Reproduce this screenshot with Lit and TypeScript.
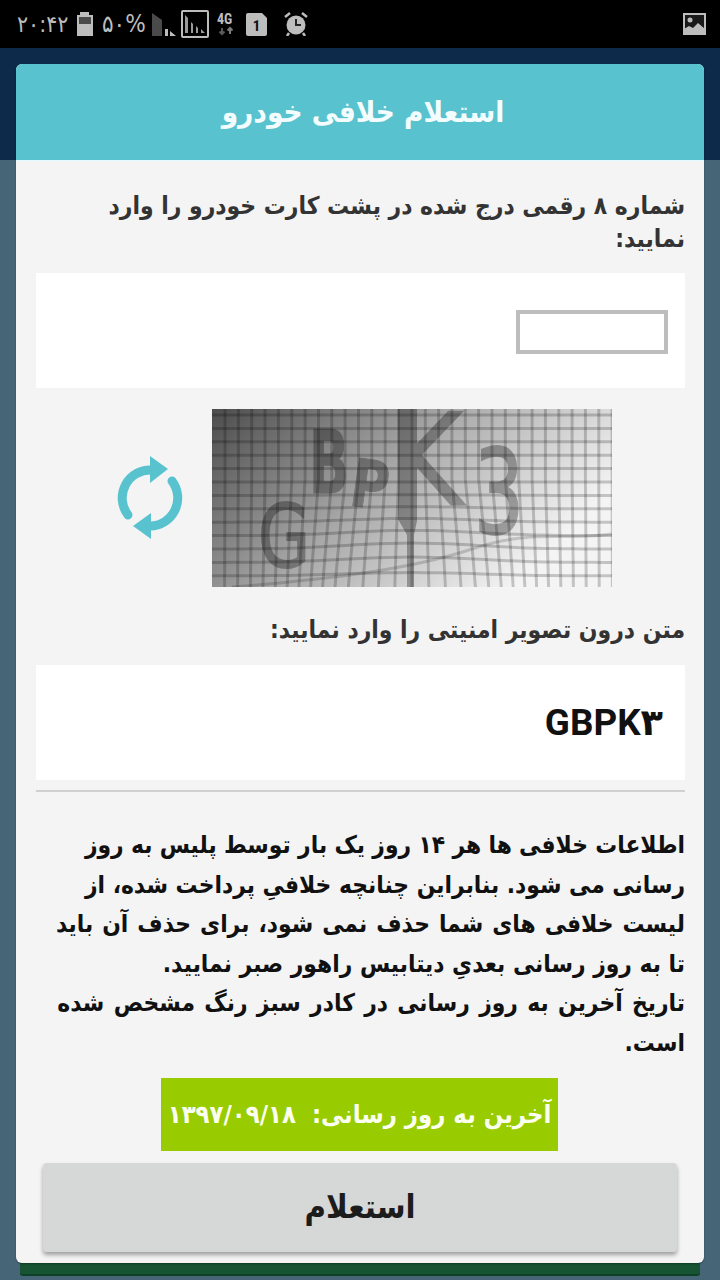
import { LitElement, html, css, svg } from "lit";
import { customElement } from "lit/decorators.js";

@customElement("app-root")
export class AppRoot extends LitElement {
  static styles = css`
    :host { display: block; width: 720px; height: 1280px; position: relative; overflow: hidden; background: #466678; font-family: "DejaVu Sans Condensed", "DejaVu Sans", sans-serif; font-stretch: condensed; }
    * { box-sizing: border-box; }
    .page { height: 1280px; display: flex; flex-direction: column; }
    .status { height: 48px; background: #000; display: flex; align-items: center; padding: 0 14px 0 17px; color: #bdbdbd; flex: none; }
    .status .time { font-size: 23px; line-height: 1; width: 53px; flex: none; direction: ltr; white-space: nowrap; }
    .status svg { display: block; flex: none; }
    .status .pct { font-size: 24px; line-height: 1; width: 40px; flex: none; margin-left: 9px; white-space: nowrap; }
    .spacer { flex: 1; }
    .ic-batt { margin-left: 7px; }
    .ic-sig { margin-left: 10px; }
    .ic-box { margin-left: 5px; }
    .ic-4g { margin-left: 8px; }
    .ic-sim { margin-left: 10px; }
    .ic-alarm { margin-left: 17px; }
    .appbar { height: 112px; background: #0d2a4a; flex: none; }
    .body { flex: 1; display: flex; flex-direction: column; justify-content: flex-end; padding: 0 20px 4px; }
    .greenbar { height: 13px; background: #175433; border-radius: 0 0 3px 3px; border-bottom: 2px solid #0f4129; }
    .modal { position: absolute; left: 16px; top: 64px; width: 688px; height: 1199px; background: #f4f4f4; border-radius: 6px; display: flex; flex-direction: column; overflow: hidden; box-shadow: 0 1px 2px rgba(0,0,0,.3); }
    .head { height: 97px; background: #58c3cf; color: #f4fdfe; display: flex; align-items: center; justify-content: center; padding-left: 6px; font-size: 29.4px; font-weight: 700; flex: none; direction: rtl; border-bottom: 1px solid #dffbff; }
    .content { flex: 1; direction: rtl; padding: 28px 19px 0 20px; display: flex; flex-direction: column; }
    .label { font-size: 24.4px; font-weight: 700; color: #333; line-height: 33px; }
    .white { background: #fff; height: 115px; flex: none; display: flex; align-items: center; }
    .white.first { margin-top: 18px; }
    .input { width: 152px; height: 44px; border: 4px solid #bdbdbd; margin-right: 17px; margin-top: 3px; background: #fff; }
    .capt { display: flex; flex-direction: row; align-items: center; margin-top: 21px; height: 178px; direction: ltr; flex: none; }
    .refresh { width: 70px; height: 88px; margin-left: 79px; margin-right: 27px; flex: none; }
    .capt svg.c { width: 400px; height: 178px; display: block; flex: none; }
    .label.two { margin-top: 26px; margin-bottom: 19px; }
    .code { font: 700 36.8px Roboto, "DejaVu Sans", sans-serif; color: #111; margin-right: 22px; direction: ltr; }
    .divider { height: 2px; background: #d0d0d0; margin-top: 10px; flex: none; }
    .para { margin-top: 33px; font-size: 24.3px; font-weight: 700; color: #111; line-height: 39.6px; }
    .para div { white-space: nowrap; }
    .para .wide3 { word-spacing: 1.4px; }
    .para .wide5 { word-spacing: 1.7px; }
    .para .tight1 { word-spacing: -0.3px; }
    .last { align-self: center; width: 397px; height: 73px; background: #99cc00; color: #fbfff0; display: flex; align-items: center; justify-content: center; font-size: 25.4px; font-weight: 700; margin-top: 15px; margin-right: 2px; white-space: pre; flex: none; }
    .btn { margin: 12px 8px 0 7px; height: 89px; background: #d6d7d7; color: #1c1c1c; border-radius: 4px; box-shadow: 0 3px 4px rgba(0,0,0,.35); display: flex; align-items: center; justify-content: center; font-size: 32.6px; font-weight: 700; flex: none; }
  `;

  private warp(x: number, y: number): [number, number] {
    const dx0 = x - 200;
    const g = Math.exp(-((dx0 / 85) ** 2));
    const t = Math.max(0, (y - 70) / 108);
    return [x + dx0 * 0.28 * g * t, y + (t > 0 ? -10 * g * t * Math.sin(t * 3.1) : 0)];
  }

  private captcha() {
    const xs = Array.from({ length: 30 }, (_, i) => 13 + i * 13.35);
    const ys = Array.from({ length: 14 }, (_, i) => 6 + i * 13.4);
    const poly = (pts: [number, number][]) => pts.map((p) => p[0].toFixed(1) + "," + p[1].toFixed(1)).join(" ");
    const v = xs.map((x) => poly(Array.from({ length: 19 }, (_, i) => this.warp(x, i * 10))));
    const h = ys.map((y) => poly(Array.from({ length: 41 }, (_, i) => this.warp(i * 10, y))));
    return svg`<svg class="c" viewBox="0 0 400 178" xmlns="http://www.w3.org/2000/svg">
      <defs>
        <linearGradient id="g" x1="0" y1="0" x2="1" y2="0.45">
          <stop offset="0" stop-color="#4c4c4c"/><stop offset=".5" stop-color="#a8a8a8"/><stop offset="1" stop-color="#f4f4f4"/>
        </linearGradient>
        <filter id="s" x="-5%" y="-5%" width="110%" height="110%"><feGaussianBlur stdDeviation="0.7"/></filter>
      </defs>
      <rect width="400" height="178" fill="url(#g)"/>
      <g filter="url(#s)">
        <g stroke="#000" stroke-opacity=".2" stroke-width="3" fill="none">
          ${v.map((p) => svg`<polyline points=${p}/>`)}
          ${h.map((p) => svg`<polyline points=${p}/>`)}
        </g>
        <g opacity=".3" fill="#000" stroke="#000" font-family="'DejaVu Sans', sans-serif">
          <text x="46" y="158" font-size="88" stroke-width="2" textLength="52" lengthAdjust="spacingAndGlyphs">G</text>
          <text x="97" y="84" font-size="88" font-weight="700" stroke-width="1" textLength="40" lengthAdjust="spacingAndGlyphs">B</text>
          <text x="136" y="96" font-size="66" font-weight="700" stroke-width="1" textLength="38" lengthAdjust="spacingAndGlyphs" transform="rotate(8 136 96)">P</text>
          <text x="176" y="96" font-size="128" stroke-width="1">K</text>
          <path d="M186 0h19v112l-3 14v52h-7v-52l-9-16z" stroke="none"/>
          <text x="262" y="124" font-size="118" stroke-width="2" textLength="50" lengthAdjust="spacingAndGlyphs">3</text>
        </g>
        <path d="M20 178C120 170 200 160 260 140S350 132 400 125" fill="none" stroke="#000" stroke-opacity=".16" stroke-width="3"/>
      </g>
    </svg>`;
  }

  render() {
    return html`
      <div class="page">
        <div class="status">
          <span class="time">۲۰:۴۲</span>
          <svg class="ic-batt" width="16" height="24" viewBox="0 0 16 24"><path d="M3 0h9v3h4v21H0V3h3z" fill="#bdbdbd"/><rect x="2" y="5" width="12" height="7" fill="#4a4a4a"/></svg>
          <span class="pct">۵۰%</span>
          <svg class="ic-sig" width="24" height="23" viewBox="0 0 24 23"><path d="M0 0l10 7v16H0z" fill="#4a4a4a"/><rect x="13" y="16" width="3" height="7" fill="#bdbdbd"/><path d="M18 18l6 5h-6z" fill="#bdbdbd"/></svg>
          <svg class="ic-box" width="28" height="28" viewBox="0 0 28 28"><rect x="1" y="1" width="26" height="26" rx="1" fill="none" stroke="#bdbdbd" stroke-width="2"/><path d="M4 5l3 3v15H4z M10 12l2 2v9h-2z M15 16l2 2v5h-2z M20 19l4 4h-4z" fill="#9a9a9a"/></svg>
          <svg class="ic-4g" width="19" height="24" viewBox="0 0 19 24"><text x="0" y="12" font-family="Roboto,sans-serif" font-weight="700" font-size="14" fill="#bdbdbd">4G</text><path d="M5 16v6M2.500 19.500l2.500 2.500l2.500-2.500" stroke="#5a5a5a" stroke-width="2" fill="none"/><path d="M13 22v-6M10.500 18.500l2.500-2.500l2.500 2.500" stroke="#7a7a7a" stroke-width="2" fill="none"/></svg>
          <svg class="ic-sim" width="21" height="23" viewBox="0 0 21 23"><path d="M2 0h14l5 5v16a2 2 0 0 1-2 2H2a2 2 0 0 1-2-2V2a2 2 0 0 1 2-2z" fill="#bdbdbd"/><text x="10.500" y="18" text-anchor="middle" font-family="Roboto,sans-serif" font-weight="700" font-size="15" fill="#111">1</text></svg>
          <svg class="ic-alarm" width="24" height="24" viewBox="0 0 24 24"><circle cx="12" cy="13" r="9.500" fill="#bdbdbd"/><path d="M12 7v6h5" stroke="#222" stroke-width="2" fill="none"/><path d="M1 5l5-4M23 5l-5-4M5 21l-2 3M19 21l2 3" stroke="#bdbdbd" stroke-width="2.500" fill="none"/></svg>
          <span class="spacer"></span>
          <svg width="23" height="22" viewBox="0 0 23 22"><rect x="1" y="1" width="21" height="20" fill="#1a1a1a" stroke="#bdbdbd" stroke-width="2"/><circle cx="7" cy="7" r="2.500" fill="#bdbdbd"/><path d="M1 21v-5l5-3 4 2 5-5 7 6v5z" fill="#bdbdbd"/></svg>
        </div>
        <div class="appbar"></div>
        <div class="body"><div class="greenbar"></div></div>
      </div>
      <div class="modal">
        <div class="head">استعلام خلافی خودرو</div>
        <div class="content">
          <div class="label">شماره ۸ رقمی درج شده در پشت کارت خودرو را وارد نمایید:</div>
          <div class="white first"><div class="input"></div></div>
          <div class="capt">
            <svg class="refresh" viewBox="0 0 70 88" xmlns="http://www.w3.org/2000/svg">
              <path d="M13 61A28 28 0 0 1 37 16" fill="none" stroke="#58c3cf" stroke-width="9" stroke-linecap="round"/>
              <path d="M35 2l18 13-18 14z" fill="#58c3cf"/>
              <path d="M57 27A28 28 0 0 1 35 72" fill="none" stroke="#58c3cf" stroke-width="9" stroke-linecap="round"/>
              <path d="M36 59L18 72l18 13z" fill="#58c3cf"/>
            </svg>
            ${this.captcha()}
          </div>
          <div class="label two">متن درون تصویر امنیتی را وارد نمایید:</div>
          <div class="white"><div class="code">GBPK۳</div></div>
          <div class="divider"></div>
          <div class="para">
            <div class="tight1">اطلاعات خلافی ها هر ۱۴ روز یک بار توسط پلیس به روز</div>
            <div>رسانی می شود. بنابراین چنانچه خلافیِ پرداخت شده، از</div>
            <div class="wide3">لیست خلافی های شما حذف نمی شود، برای حذف آن باید</div>
            <div>تا به روز رسانی بعدیِ دیتابیس راهور صبر نمایید.</div>
            <div class="wide5">تاریخ آخرین به روز رسانی در کادر سبز رنگ مشخص شده</div>
            <div>است.</div>
          </div>
          <div class="last">آخرین به روز رسانی:  ۱۳۹۷/۰۹/۱۸</div>
          <div class="btn">استعلام</div>
        </div>
      </div>
    `;
  }
}
